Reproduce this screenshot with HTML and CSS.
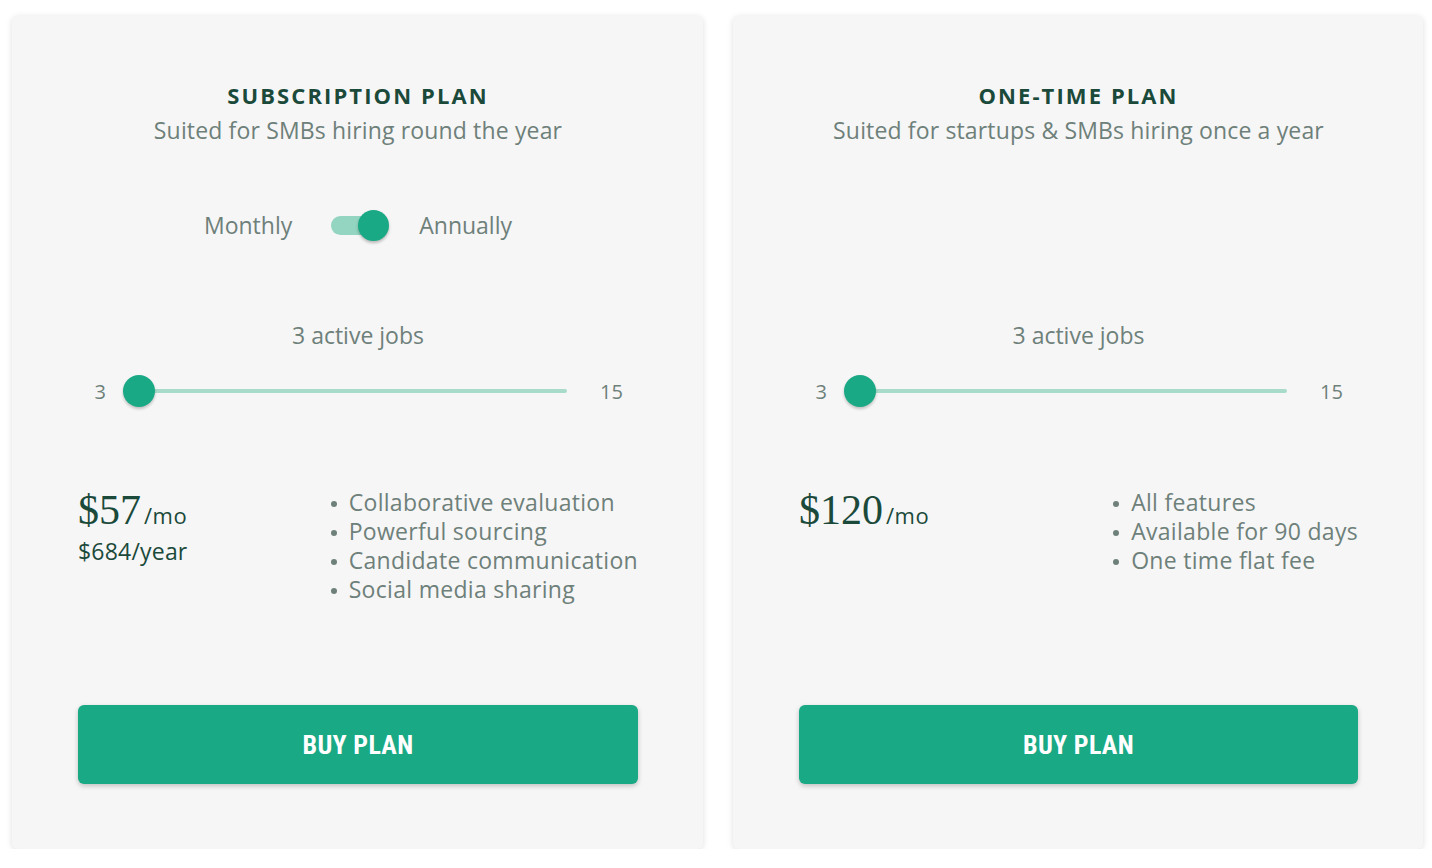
FILE: index.html
```html
<!DOCTYPE html>
<html lang="en">
<head>
<meta charset="utf-8">
<title>Pricing</title>
<link rel="stylesheet" href="styles.css">
</head>
<body>
<main class="plans">
  <section class="card">
    <h2 class="card-title">SUBSCRIPTION PLAN</h2>
    <p class="card-sub">Suited for SMBs hiring round the year</p>

    <div class="billing">
      <span class="billing-label">Monthly</span>
      <span class="switch"><span class="switch-thumb"></span></span>
      <span class="billing-label">Annually</span>
    </div>

    <div class="jobs-label">3 active jobs</div>
    <div class="range">
      <span class="range-min">3</span>
      <div class="range-slider">
        <span class="range-track"></span>
        <span class="range-thumb"></span>
      </div>
      <span class="range-max">15</span>
    </div>

    <div class="offer">
      <div class="price">
        <div class="price-main"><span class="amount">$57</span><span class="per">/mo</span></div>
        <div class="price-year">$684/year</div>
      </div>
      <ul class="features">
        <li>Collaborative evaluation</li>
        <li>Powerful sourcing</li>
        <li>Candidate communication</li>
        <li>Social media sharing</li>
      </ul>
    </div>

    <button class="buy" type="button">BUY PLAN</button>
  </section>

  <section class="card">
    <h2 class="card-title">ONE-TIME PLAN</h2>
    <p class="card-sub">Suited for startups &amp; SMBs hiring once a year</p>

    <div class="billing billing-empty"></div>

    <div class="jobs-label">3 active jobs</div>
    <div class="range">
      <span class="range-min">3</span>
      <div class="range-slider">
        <span class="range-track"></span>
        <span class="range-thumb"></span>
      </div>
      <span class="range-max">15</span>
    </div>

    <div class="offer">
      <div class="price">
        <div class="price-main"><span class="amount">$120</span><span class="per">/mo</span></div>
      </div>
      <ul class="features">
        <li>All features</li>
        <li>Available for 90 days</li>
        <li>One time flat fee</li>
      </ul>
    </div>

    <button class="buy" type="button">BUY PLAN</button>
  </section>
</main>
</body>
</html>
```

FILE: styles.css
```css
* { box-sizing: border-box; }

html, body {
  margin: 0;
  padding: 0;
  background: #ffffff;
}

body {
  font-family: "Open Sans", "Noto Sans", sans-serif;
  color: #6b7d76;
}

.plans {
  display: grid;
  grid-template-columns: 691px 690px;
  column-gap: 30px;
  padding: 16px 9px 0 12px;
}

.card {
  height: 833px;
  background: #f6f6f6;
  border-radius: 6px;
  box-shadow: 0 1px 6px rgba(0, 0, 0, 0.13);
  padding: 64px 65px 65px 66px;
  display: flex;
  flex-direction: column;
}

.card-title {
  margin: 0;
  text-align: center;
  font-size: 22px;
  line-height: 30px;
  font-weight: 700;
  letter-spacing: 2.1px;
  color: #1b4a3b;
}

.card-sub {
  margin: 5px 0 0;
  text-align: center;
  font-size: 23px;
  line-height: 30px;
  letter-spacing: 0.15px;
  color: #6e807a;
}

/* billing period switch */
.billing {
  margin-top: 60px;
  height: 40px;
  display: flex;
  align-items: center;
  justify-content: center;
}

.billing-label {
  font-size: 23px;
  color: #6e807a;
}

.switch {
  position: relative;
  width: 56px;
  height: 19px;
  margin: 0 32px 0 39px;
  border-radius: 10px;
  background: #93d5c0;
}

.switch-thumb {
  position: absolute;
  right: -2px;
  top: 50%;
  width: 31px;
  height: 31px;
  margin-top: -15.5px;
  border-radius: 50%;
  background: #1aa985;
  box-shadow: 0 2px 3px rgba(0, 0, 0, 0.25);
}

/* job count slider */
.jobs-label {
  margin-top: 75px;
  text-align: center;
  font-size: 23px;
  line-height: 30px;
  color: #6e807a;
}

.range {
  margin-top: 25px;
  height: 32px;
  display: flex;
  align-items: center;
  font-size: 20px;
  color: #6e807a;
}

.range-min {
  width: 28px;
  text-align: right;
}

.range-slider {
  position: relative;
  flex: 1;
  height: 32px;
  margin: 0 17px;
}

.range-max {
  width: 38px;
}

.range-track {
  position: absolute;
  left: 16px;
  right: 16px;
  top: 14px;
  height: 4px;
  border-radius: 2px;
  background: #a8dbc9;
}

.range-thumb {
  position: absolute;
  left: 0;
  top: 0;
  width: 32px;
  height: 32px;
  border-radius: 50%;
  background: #1aa985;
  box-shadow: 0 2px 3px rgba(0, 0, 0, 0.22);
}

/* price and features */
.offer {
  margin-top: 81px;
  display: flex;
  justify-content: space-between;
  align-items: flex-start;
}

.price-main {
  height: 44px;
  font-family: "Liberation Serif", "DejaVu Serif", serif;
  font-size: 42px;
  line-height: 44px;
  color: #1b4a3b;
}

.per {
  margin-left: 3px;
  font-family: "Open Sans", "Noto Sans", sans-serif;
  font-size: 22px;
  line-height: 1;
  letter-spacing: 0.5px;
}

.price-year {
  margin-top: 5px;
  font-size: 23px;
  line-height: 29px;
  letter-spacing: 0.2px;
  color: #1b4a3b;
}

.features {
  margin: 0;
  padding: 0;
  list-style: none;
}

.features li {
  position: relative;
  padding-left: 19px;
  font-size: 23px;
  line-height: 29px;
  letter-spacing: 0.3px;
  color: #6e807a;
}

.features li::before {
  content: "";
  position: absolute;
  left: 1px;
  top: 13px;
  width: 6px;
  height: 6px;
  border-radius: 50%;
  background: #6e807a;
}

.buy {
  margin-top: auto;
  height: 79px;
  width: 100%;
  border: 0;
  border-radius: 6px;
  background: #1aa985;
  box-shadow: 0 2px 5px rgba(0, 0, 0, 0.22);
  color: #ffffff;
  font-family: "Liberation Sans Narrow", "Roboto Condensed", "Roboto", sans-serif;
  font-weight: 700;
  font-size: 26px;
  letter-spacing: 0.3px;
  cursor: pointer;
}
```
